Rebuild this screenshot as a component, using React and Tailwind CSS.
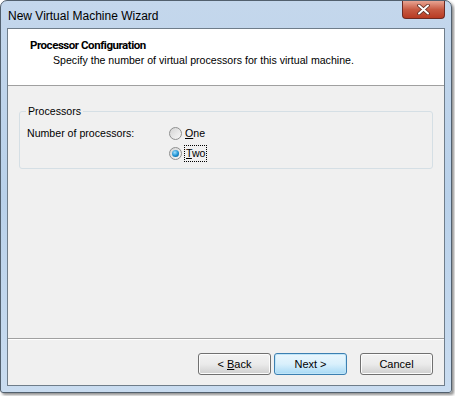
import React, { useState } from "react";

const Radio = ({ checked, onClick }) => (
    <span
        onClick={onClick}
        className="w-[13px] h-[13px] rounded-full border border-[#8e8f8f] bg-gradient-to-br from-[#d4d4d4] to-[#f8f8f8] flex items-center justify-center"
    >
        {checked && (
            <span className="w-[7px] h-[7px] rounded-full bg-[radial-gradient(circle_at_40%_35%,#9fe0ff,#1b8fd0_55%,#0b4f80)]" />
        )}
    </span>
);

const WinButton = ({ children, active }) => (
    <button
        className={
            "w-[73px] h-[22px] rounded-[3px] text-[11px] text-black flex items-center justify-center " +
            (active
                ? "border border-[#3c7fb1] bg-gradient-to-b from-[#eaf6fd] via-[#d9f0fc] to-[#a7d9f5] shadow-[inset_0_0_0_1px_#c0e5f8]"
                : "border border-[#707070] bg-gradient-to-b from-[#f2f2f2] via-[#ebebeb] to-[#cfcfcf] shadow-[inset_0_0_0_1px_#fcfcfc]")
        }
    >
        {children}
    </button>
);

export default function App() {
    const [count, setCount] = useState("two");

    return (
        <div className="w-[455px] h-[396px] bg-white font-['Liberation_Sans',Arial,sans-serif] text-[10.6px] text-black">
            <div className="w-[452px] h-[393px] rounded-t-[7px] rounded-b-[3px] border border-[#52606e] bg-gradient-to-b from-[#c4d7ec] via-[#b9d1ea] to-[#c9dcf0] shadow-[2px_2px_3px_rgba(0,0,0,0.45)] flex flex-col">
                {/* title bar */}
                <div className="h-[27px] flex items-start justify-between pl-[7px] pr-[6px]">
                    <span className="mt-[6px] text-[12px] text-black">New Virtual Machine Wizard</span>
                    <div className="w-[43px] h-[18px] rounded-b-[4px] border border-t-0 border-[#6d2a22] bg-gradient-to-b from-[#e8a493] via-[#c75a42] to-[#b83a22] flex items-center justify-center">
                        <svg width="13" height="11" viewBox="0 0 13 11">
                            <path d="M2 1.5 L11 9.5 M11 1.5 L2 9.5" stroke="#5a2a20" strokeWidth="3.6" strokeLinecap="round" />
                            <path d="M2 1.5 L11 9.5 M11 1.5 L2 9.5" stroke="#ffffff" strokeWidth="2" strokeLinecap="round" />
                        </svg>
                    </div>
                </div>

                {/* client */}
                <div className="mx-[6px] mb-[6px] flex-1 border border-[#6f7d8a] bg-[#f0f0f0] flex flex-col">
                    <div className="h-[57px] bg-white border-b border-[#a0a0a0] pl-[22px] pt-[9px]">
                        <div className="font-bold font-['Roboto',sans-serif] text-[11.5px] tracking-[-0.45px] leading-[15px]">Processor Configuration</div>
                        <div className="pl-[23px] leading-[15px]">Specify the number of virtual processors for this virtual machine.</div>
                    </div>

                    <div className="flex-1 px-[11px] pt-[17px]">
                        <div className="relative h-[58px] mt-[8px] rounded-[3px] border border-[#d5dfe5]">
                            <span className="absolute -top-[8px] left-[6px] px-[2px] bg-[#f0f0f0] leading-[14px]">Processors</span>
                            <div className="flex pl-[7px] pt-[14px]">
                                <span className="w-[142px] leading-[15px]">Number of processors:</span>
                                <div className="flex flex-col gap-[5px]">
                                    <label className="flex items-center gap-[3px] leading-[15px]" onClick={() => setCount("one")}>
                                        <Radio checked={count === "one"} />
                                        <span><u>O</u>ne</span>
                                    </label>
                                    <label className="flex items-center gap-[3px] leading-[15px]" onClick={() => setCount("two")}>
                                        <Radio checked={count === "two"} />
                                        <span className="outline outline-1 outline-dotted outline-black px-[1px]"><u>T</u>wo</span>
                                    </label>
                                </div>
                            </div>
                        </div>
                    </div>

                    <div className="h-[47px] border-t border-[#a0a0a0] shadow-[inset_0_1px_0_#ffffff] flex items-start justify-end pt-[14px] pr-[11px]">
                        <WinButton><span>&lt;&nbsp;<u>B</u>ack</span></WinButton>
                        <div className="w-[3px]" />
                        <WinButton active>Next &gt;</WinButton>
                        <div className="w-[13px]" />
                        <WinButton>Cancel</WinButton>
                    </div>
                </div>
            </div>
        </div>
    );
}
